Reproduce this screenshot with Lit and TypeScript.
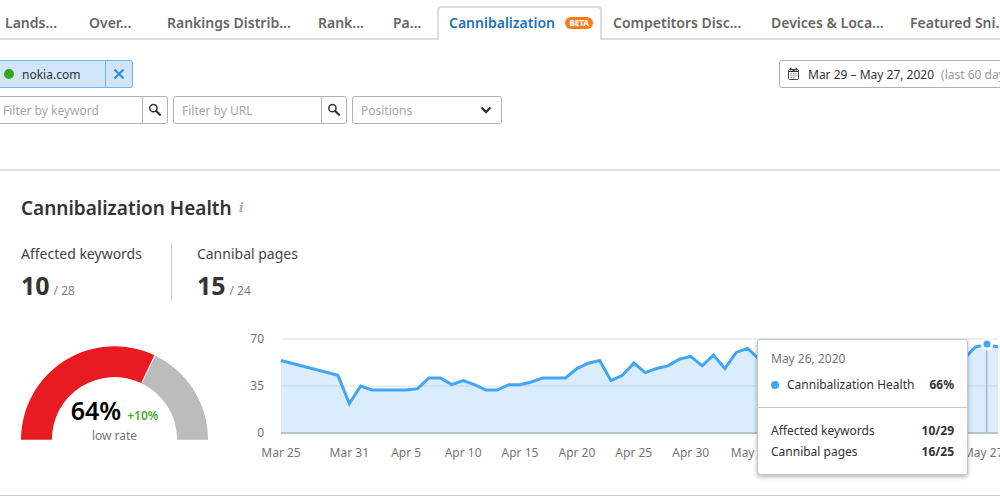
import { LitElement, html, css, svg } from "lit";
import { customElement } from "lit/decorators.js";
import { classMap } from "lit/directives/class-map.js";

const TABS = [
  "Lands...",
  "Over...",
  "Rankings Distrib...",
  "Rank...",
  "Pa...",
  "Cannibalization",
  "Competitors Disc...",
  "Devices & Loca...",
  "Featured Sni...",
];
const ACTIVE_TAB = "Cannibalization";

/* [days since Mar 25, health] */
const SERIES: [number, number][] = [
  [0, 54], [5, 43], [6, 22], [7, 35], [8, 32], [11, 32], [12, 33], [13, 41],
  [14, 41], [15, 36], [16, 39], [17, 36], [18, 32], [19, 32], [20, 36],
  [21, 36], [22, 38], [23, 41], [25, 41], [26, 48], [27, 52], [28, 54],
  [29, 39], [30, 43], [31, 52], [32, 45], [33, 48], [34, 50], [35, 55],
  [36, 57], [37, 50], [38, 58], [39, 48], [40, 60], [41, 63], [42, 55],
  [46, 52], [52, 50], [58, 50], [60, 55], [61, 64], [62, 66], [63, 64],
];
const LAST_DAY = 63;
const MAX_VALUE = 70;
const HOVER_DAY = 62;
const HOVER_VALUE = 66;

const DAY_LABELS: [number, string][] = [
  [0, "Mar 25"], [6, "Mar 31"], [11, "Apr 5"], [16, "Apr 10"], [21, "Apr 15"],
  [26, "Apr 20"], [31, "Apr 25"], [36, "Apr 30"], [41, "May 5"], [61.7, "May 27"],
];

const searchIcon = svg`<svg class="icon" viewBox="0 0 14 14" aria-hidden="true">
  <circle cx="5.4" cy="5.2" r="3.6" fill="none" stroke="#333" stroke-width="1.5"/>
  <path d="M8.2 8 L12 11.8" stroke="#333" stroke-width="2.2" stroke-linecap="round"/>
</svg>`;

@customElement("health-gauge")
export class HealthGauge extends LitElement {
  static properties = { value: { type: Number } };
  declare value: number;

  static styles = css`
    :host { display: block; position: relative; width: 187px; height: 94px; }
    .arc { display: block; width: 100%; height: 100%; }
    .label {
      position: absolute; inset: auto 0 -6px 0; text-align: center;
      display: flex; flex-direction: column;
    }
    .figures { display: flex; align-items: baseline; justify-content: center; gap: 6px; line-height: 20px; }
    .value { font-size: 25px; font-weight: 600; color: #000; }
    .delta { font-size: 12px; font-weight: 600; color: #3fae29; }
    .rate { font-size: 12px; line-height: 20px; color: #757575; }
  `;

  private band(from: number, to: number) {
    const at = (r: number, share: number) => {
      const a = Math.PI * (1 - share);
      return `${94 + r * Math.cos(a)} ${94 - r * Math.sin(a)}`;
    };
    return `M${at(94, from)} A94 94 0 0 1 ${at(94, to)} L${at(63, to)} A63 63 0 0 0 ${at(63, from)} Z`;
  }

  render() {
    const share = this.value / 100;
    return html`
      <svg class="arc" viewBox="0 0 188 94" aria-hidden="true">
        <path d=${this.band(0, share)} fill="#e71b21" />
        <path d=${this.band(share + 0.004, 1)} fill="#bcbcbc" />
      </svg>
      <div class="label">
        <div class="figures"><span class="value">${this.value}%</span><span class="delta">+10%</span></div>
        <span class="rate">low rate</span>
      </div>
    `;
  }
}

@customElement("health-chart")
export class HealthChart extends LitElement {
  static styles = css`
    :host { display: grid; grid-template-columns: 24px 1fr; column-gap: 17px; }
    .scale {
      display: flex; flex-direction: column; justify-content: space-between;
      height: 114px; margin-top: -10px; text-align: right;
      font-size: 12px; line-height: 20px; color: #757575;
    }
    .plot { position: relative; height: 94px; }
    .canvas { display: block; width: 100%; height: 100%; overflow: visible; }
    .days { position: relative; grid-column: 2; height: 20px; }
    .day {
      position: absolute; transform: translateX(-50%); white-space: nowrap;
      font-size: 12px; line-height: 20px; color: #757575;
    }
    .dot {
      position: absolute; width: 7px; height: 7px; border: 3px solid #fff;
      border-radius: 50%; background: #42a5f5; transform: translate(-50%, 50%);
    }
    .tooltip {
      position: absolute; top: 0; right: 30px; width: 209px;
      border: 1px solid #c4c7c8; border-radius: 3px; background: #fff;
      box-shadow: 0 2px 4px rgba(0, 0, 0, 0.3); font-size: 12px; color: #333;
      z-index: 1;
    }
    .group { padding: 8px 13px; }
    .group + .group { border-top: 1px solid #c4c7c8; padding: 12px 13px; }
    .date { line-height: 22px; color: #757575; }
    .row { display: flex; align-items: center; line-height: 21px; }
    .head { line-height: 29px; }
    .bullet { width: 8px; height: 8px; margin-right: 8px; border-radius: 50%; background: #42a5f5; }
    .amount { margin-left: auto; font-weight: 700; }
  `;

  render() {
    const line = SERIES.map(([d, v]) => `${d},${MAX_VALUE - v}`).join(" ");
    const pct = (day: number) => `${(day / LAST_DAY) * 100}%`;
    return html`
      <div class="scale"><span>70</span><span>35</span><span>0</span></div>
      <div class="plot">
        <svg class="canvas" viewBox="0 0 63 70" preserveAspectRatio="none" role="img" aria-label="Cannibalization Health">
          <path d="M0 0H63M0 35H63" fill="none" stroke="#edf0f1" stroke-width="2" vector-effect="non-scaling-stroke" />
          <polygon points="0,70 ${line} 63,70" fill="#42a5f5" fill-opacity="0.2" />
          <path d="M0 70H63" stroke="#b4c5d0" stroke-width="2" vector-effect="non-scaling-stroke" />
          <path d="M62 4V70" stroke="#a3b9c9" stroke-width="1.5" vector-effect="non-scaling-stroke" />
          <polyline points=${line} fill="none" stroke="#42a5f5" stroke-width="3" vector-effect="non-scaling-stroke" />
        </svg>
        <span class="dot" style="left:${pct(HOVER_DAY)};bottom:${(HOVER_VALUE / MAX_VALUE) * 100}%"></span>
        <div class="tooltip" role="tooltip">
          <div class="group">
            <div class="date">May 26, 2020</div>
            <div class="row head"><span class="bullet"></span><span>Cannibalization Health</span><span class="amount">66%</span></div>
          </div>
          <div class="group">
            <div class="row"><span>Affected keywords</span><span class="amount">10/29</span></div>
            <div class="row"><span>Cannibal pages</span><span class="amount">16/25</span></div>
          </div>
        </div>
      </div>
      <div class="days">
        ${DAY_LABELS.map(([day, text]) => html`<span class="day" style="left:${pct(day)}">${text}</span>`)}
      </div>
    `;
  }
}

@customElement("app-root")
export class AppRoot extends LitElement {
  static styles = css`
    :host {
      display: block; min-height: 100vh; overflow: hidden; background: #fff; color: #333;
      font-family: "Noto Sans", "Open Sans", sans-serif; font-size: 12px;
    }
    * { box-sizing: border-box; }
    .tabs {
      display: grid; height: 40px; margin-left: -7px; padding-top: 6px;
      grid-template-columns: 84px 78px 151px 75px 56px 164px 158px 139px 1fr;
      box-shadow: inset 0 -2px #ddd;
    }
    .tab {
      display: flex; align-items: center; padding: 0 12px; white-space: nowrap;
      font-size: 14px; font-weight: 600; line-height: 20px; color: #666; text-decoration: none;
    }
    .tab.active {
      justify-content: space-between; padding: 0 7px 2px 10px; margin-right: -1px;
      border: 2px solid #ddd; border-bottom: 0; border-radius: 4px 4px 0 0;
      background: #fff; color: #1d70c0;
    }
    .beta {
      padding: 0 4px; border-radius: 6px; background: #ff7a1a; color: #fff;
      font-size: 8px; font-weight: 800; line-height: 12px;
    }
    .filters { display: flex; justify-content: space-between; align-items: flex-start; height: 129px; padding-top: 20px; }
    .left { display: flex; flex-direction: column; gap: 8px; margin-left: -6px; }
    .chip { display: flex; width: 139px; height: 28px; border: 1px solid #6db3f2; border-radius: 3px; background: #d0e6f8; }
    .site { flex: 1; display: flex; align-items: center; gap: 8px; padding-left: 9px; }
    .status { width: 10px; height: 10px; border-radius: 50%; background: #35a817; }
    .close {
      display: flex; align-items: center; justify-content: center; width: 27px; padding: 0;
      border: 0; border-left: 1px solid #6db3f2; background: none;
    }
    .cross { width: 12px; height: 12px; }
    .row { display: flex; gap: 5px; }
    .field { display: flex; width: 174px; height: 28px; border: 1px solid #adb3b6; border-radius: 3px; background: #fff; }
    .input {
      flex: 1; min-width: 0; padding: 0 8px; border: 0; background: none; outline: none;
      font: inherit; color: #333;
    }
    .input::placeholder { color: #a6a6a6; opacity: 1; }
    .search {
      display: flex; align-items: center; justify-content: center; width: 25px; padding: 0;
      border: 0; border-left: 1px solid #adb3b6; background: none;
    }
    .icon { width: 14px; height: 14px; }
    .picker { position: relative; width: 150px; height: 28px; }
    .select {
      width: 100%; height: 100%; padding: 0 8px; border: 1px solid #adb3b6; border-radius: 3px;
      appearance: none; background: #fff; font: inherit; color: #a6a6a6;
    }
    .chevron { position: absolute; right: 10px; top: 8px; width: 12px; height: 12px; pointer-events: none; }
    .dates {
      display: flex; align-items: center; gap: 7px; width: 251px; height: 28px; margin-right: -30px;
      padding: 0 7px; border: 1px solid #adb3b6; border-radius: 3px; background: #fff;
      font: inherit; color: #333; white-space: nowrap;
    }
    .range { color: #9a9a9a; }
    .panel { border-top: 2px solid #ddd; border-bottom: 1px solid #ccc; padding: 23px 2px 0 21px; height: 327px; }
    .title { display: flex; align-items: center; gap: 7px; margin: 0; font-size: 19px; font-weight: 600; line-height: 28px; }
    .info { font: italic 700 13px/20px "DejaVu Serif", serif; color: #aab0b3; }
    .stats { display: flex; margin-top: 21px; height: 57px; }
    .stat + .stat { margin-left: 29px; padding-left: 25px; border-left: 1px solid #ccc; }
    .name { font-size: 14px; line-height: 22px; color: #444; }
    .count { display: flex; align-items: baseline; gap: 4px; line-height: 40px; }
    .number { font-size: 25px; font-weight: 700; }
    .total { font-size: 12px; color: #808080; }
    .charts { display: grid; grid-template-columns: 188px minmax(0, 1fr); column-gap: 31px; margin-top: 39px; }
    .gauge { margin-top: 7px; }
  `;

  private field(id: string, label: string) {
    return html`<div class="field">
      <input class="input" id=${id} type="text" placeholder=${label} aria-label=${label} />
      <button class="search" aria-label="Search">${searchIcon}</button>
    </div>`;
  }

  render() {
    return html`
      <nav class="tabs">
        ${TABS.map((t) => html`<a href="#" class=${classMap({ tab: true, active: t === ACTIVE_TAB })}
          ><span>${t}</span>${t === ACTIVE_TAB ? html`<span class="beta">BETA</span>` : ""}</a>`)}
      </nav>
      <section class="filters">
        <div class="left">
          <div class="chip">
            <span class="site"><span class="status"></span>nokia.com</span>
            <button class="close" aria-label="Remove">
              <svg class="cross" viewBox="0 0 12 12"><path d="M1.5 1.5L10.5 10.5M10.5 1.5L1.5 10.5" stroke="#2a8de0" stroke-width="2"/></svg>
            </button>
          </div>
          <div class="row">
            ${this.field("keyword", "Filter by keyword")}
            ${this.field("url", "Filter by URL")}
            <div class="picker">
              <select class="select" aria-label="Positions"><option>Positions</option></select>
              <svg class="chevron" viewBox="0 0 12 12"><path d="M1.5 3.5L6 8L10.5 3.5" fill="none" stroke="#333" stroke-width="2.4"/></svg>
            </div>
          </div>
        </div>
        <button class="dates">
          <svg class="icon" viewBox="0 0 14 14" aria-hidden="true">
            <rect x="1.5" y="2.5" width="10" height="10" rx="1" fill="none" stroke="#444"/>
            <path d="M3.8 0.8V3.5M9.2 0.8V3.5" stroke="#333" stroke-width="1.4"/>
            <path d="M4.5 2.6H8.5L6.5 4.6Z" fill="#222"/>
            <path d="M2 4.5H11" stroke="#333"/>
            <path d="M3.5 6.8H9.7M3.5 8.8H9.7M3.5 10.8H8" stroke="#777" stroke-dasharray="1.6 0.7"/>
          </svg>
          <span>Mar 29 – May 27, 2020</span><span class="range">(last 60 days)</span>
        </button>
      </section>
      <section class="panel">
        <h2 class="title">Cannibalization Health <span class="info">i</span></h2>
        <div class="stats">
          <div class="stat">
            <div class="name">Affected keywords</div>
            <div class="count"><span class="number">10</span><span class="total">/ 28</span></div>
          </div>
          <div class="stat">
            <div class="name">Cannibal pages</div>
            <div class="count"><span class="number">15</span><span class="total">/ 24</span></div>
          </div>
        </div>
        <div class="charts">
          <health-gauge class="gauge" .value=${64}></health-gauge>
          <health-chart></health-chart>
        </div>
      </section>
    `;
  }
}
